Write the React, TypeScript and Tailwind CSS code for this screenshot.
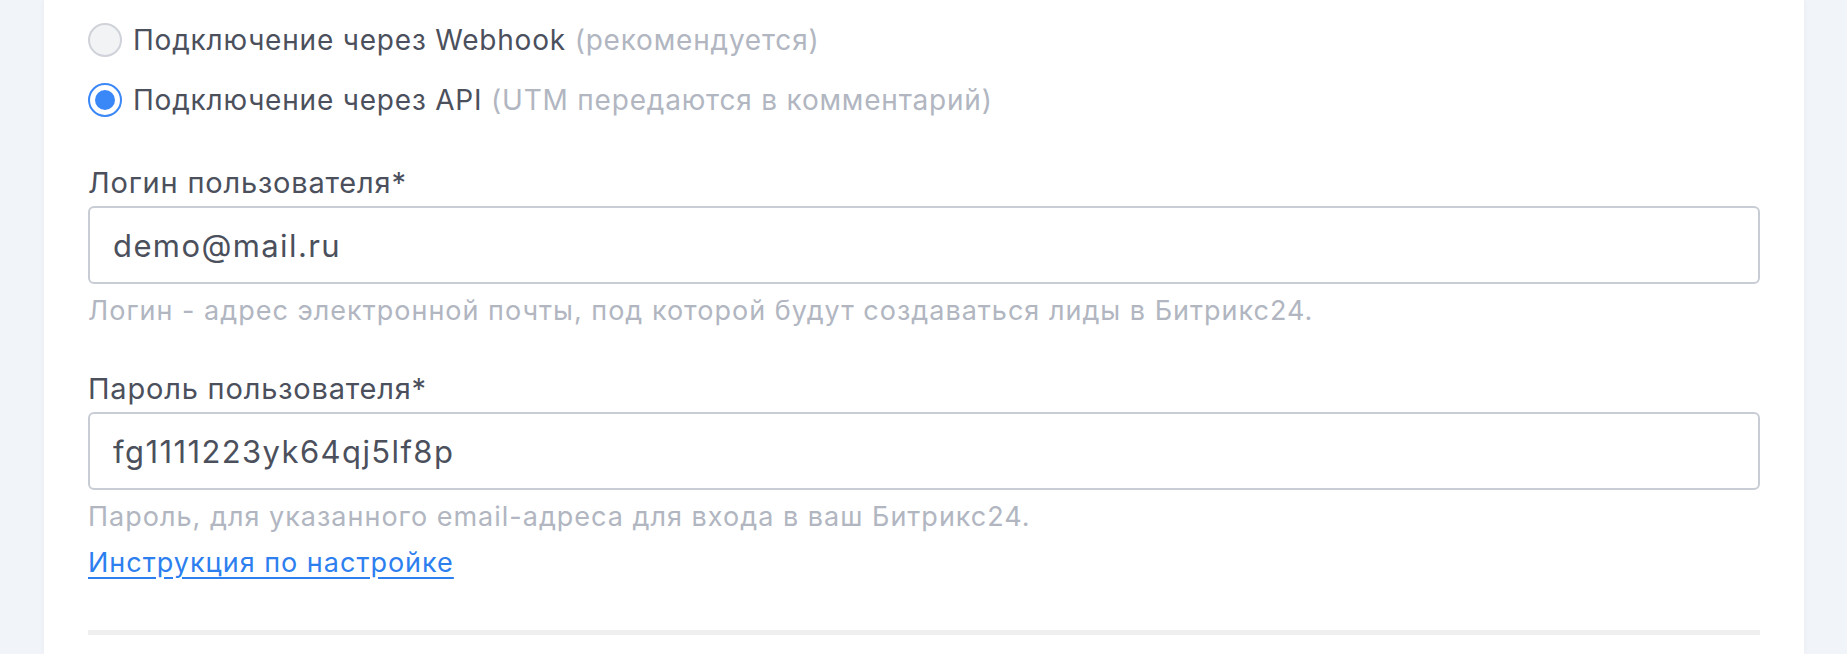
import React, { useState } from 'react';

const font = { fontFamily: 'Inter, "Noto Sans", sans-serif' };

const Radio = ({ checked, onClick }: { checked: boolean; onClick: () => void }) => (
    <button
        type="button"
        onClick={onClick}
        className={`w-[34px] h-[34px] rounded-full shrink-0 flex items-center justify-center border-2 ${
            checked ? 'border-[#3a87f7] bg-white' : 'border-[#cfd2d8] bg-[#f2f3f5]'
        }`}
    >
        {checked && <span className="w-[20px] h-[20px] rounded-full bg-[#3a87f7]" />}
    </button>
);

const Field = ({ label, value, hint }: { label: string; value: string; hint: string }) => (
    <div className="flex flex-col">
        <label className="text-[29px] leading-[34px] tracking-[0.8px] text-[#4b505c]">{label}</label>
        <input
            defaultValue={value}
            className="mt-[6px] h-[78px] w-full rounded-[6px] border-2 border-[#c8ccd4] px-[23px] text-[31px] tracking-[1.4px] text-[#4b505c] outline-none bg-white"
        />
        <p className="mt-[10px] text-[27px] leading-[34px] tracking-[1px] text-[#b1b6c1]">{hint}</p>
    </div>
);

export default function App() {
    const [mode, setMode] = useState<'webhook' | 'api'>('api');

    return (
        <div className="w-full h-[654px] bg-[#f1f4f8] overflow-hidden" style={font}>
            <div className="ml-[44px] mr-[43px] h-full bg-white shadow-[0_0_6px_rgba(0,0,0,0.04)] px-[44px]">
                {/* connection type */}
                <div className="flex flex-col gap-[18px] pt-[19px]">
                    <div className="flex items-center gap-[11px]">
                        <Radio checked={mode === 'webhook'} onClick={() => setMode('webhook')} />
                        <span className="text-[28px] leading-[42px] tracking-[0.8px] text-[#4b505c]">
                            Подключение через Webhook <span className="text-[#b1b6c1]">(рекомендуется)</span>
                        </span>
                    </div>
                    <div className="flex items-center gap-[11px]">
                        <Radio checked={mode === 'api'} onClick={() => setMode('api')} />
                        <span className="text-[28px] leading-[42px] tracking-[0.8px] text-[#4b505c]">
                            Подключение через API <span className="text-[#b1b6c1]">(UTM передаются в комментарий)</span>
                        </span>
                    </div>
                </div>

                <div className="mt-[45px] flex flex-col gap-[44px]">
                    <Field
                        label="Логин пользователя*"
                        value="demo@mail.ru"
                        hint="Логин - адрес электронной почты, под которой будут создаваться лиды в Битрикс24."
                    />
                    <div className="flex flex-col items-start">
                        <div className="w-full">
                            <Field
                                label="Пароль пользователя*"
                                value="fg1111223yk64qj5lf8p"
                                hint="Пароль, для указанного email-адреса для входа в ваш Битрикс24."
                            />
                        </div>
                        <a
                            href="#"
                            className="mt-[12px] text-[27px] leading-[34px] tracking-[1px] text-[#2d7fef] underline underline-offset-[5px]"
                        >
                            Инструкция по настройке
                        </a>
                    </div>
                </div>

                <div className="mt-[50px] h-[5px] bg-[#efefef]" />
            </div>
        </div>
    );
}
